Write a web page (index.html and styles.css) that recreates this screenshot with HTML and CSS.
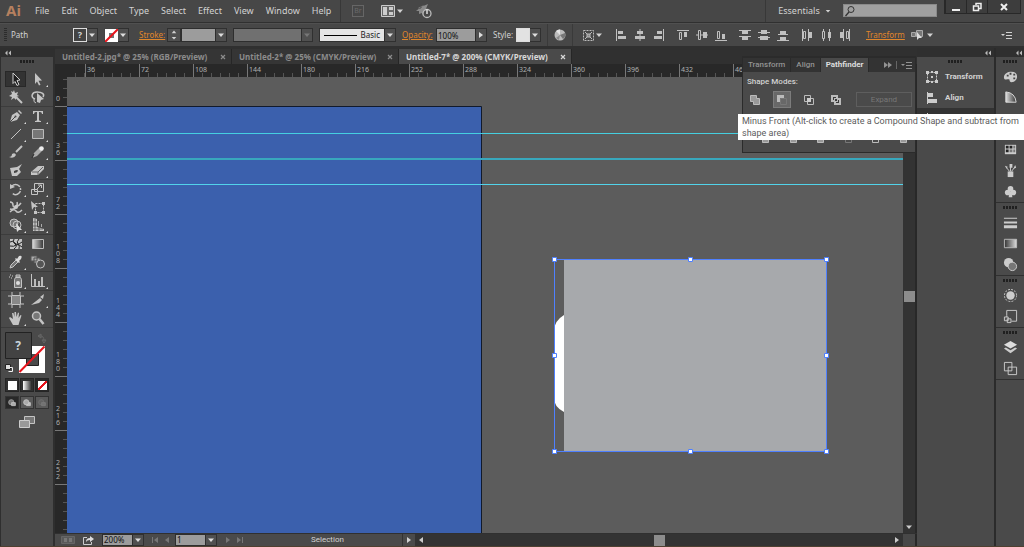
FILE: index.html
```html
<!DOCTYPE html>
<html lang="en">
<head>
<meta charset="utf-8">
<title>Untitled-7* @ 200% (CMYK/Preview)</title>
<link rel="stylesheet" href="styles.css">
</head>
<body>
<svg class="sprite" aria-hidden="true">
  <defs>
    <linearGradient id="fade"><stop offset="0" stop-color="#333"/><stop offset="1" stop-color="#ddd"/></linearGradient>
    <linearGradient id="fade-rev"><stop offset="0" stop-color="#ddd"/><stop offset="1" stop-color="#333"/></linearGradient>
  </defs>
  <symbol id="select" viewBox="0 0 16 16"><path d="M5 2l7 7-3 .5 2 4-2 1-2-4-2 2z" fill="#1c1c1c" stroke="#ccc"/></symbol>
  <symbol id="direct" viewBox="0 0 16 16"><path d="M5 2l7 7.500-3.500.3 2 4-1.500.7-2-4L5 13z" fill="#c4c4c4"/></symbol>
  <symbol id="wand" viewBox="0 0 16 16"><path d="M6 1l1 3 3-1-1 3 2 1-3 1 0 3-2-2-3 2 1-3-3-1 3-2-1-3 2 1z" fill="#c4c4c4"/><path d="M8 8l6 6" stroke="#c4c4c4" stroke-width="2"/></symbol>
  <symbol id="lasso" viewBox="0 0 16 16"><path d="M5 10C0 8 2 3 7 3s8 2 6 5" fill="none" stroke="#c4c4c4" stroke-width="1.500"/><path d="M4 10q-1 3 2 4" fill="none" stroke="#c4c4c4"/><path d="M7 4l7 6-3 1-1 3-3-1z" fill="#c4c4c4"/></symbol>
  <symbol id="pen" viewBox="0 0 16 16"><path d="M2 14l2-7 5-3 3 3-3 5zM10 3l1-1 3 3-1 1z" fill="#c4c4c4"/><path d="M2 14l5-5" stroke="#474747"/><circle cx="7.500" cy="8.500" r="1" fill="#474747"/></symbol>
  <symbol id="type" viewBox="0 0 16 16"><path d="M3 3h10v3h-1q0-2-2-2H9v8q0 1 2 1v1H5v-1q2 0 2-1V4H6Q4 4 4 6H3z" fill="#c4c4c4"/></symbol>
  <symbol id="line" viewBox="0 0 16 16"><path d="M3 13L13 3" stroke="#c4c4c4"/></symbol>
  <symbol id="rect" viewBox="0 0 16 16"><path d="M2.500 3.500h11v9h-11z" fill="#777" stroke="#bbb"/></symbol>
  <symbol id="brush" viewBox="0 0 16 16"><path d="M14 2L8 8" stroke="#c4c4c4" stroke-width="2"/><path d="M1 13q3 0 3-3 3-2 4 1-2 4-7 2z" fill="#c4c4c4"/></symbol>
  <symbol id="pencil" viewBox="0 0 16 16"><path d="M2 14l2-5 6-6 3 3-6 6z" fill="#aaa"/><circle cx="11.500" cy="4.500" r="2.300" fill="#eee"/><path d="M2 14l2-4" stroke="#222"/></symbol>
  <symbol id="blob" viewBox="0 0 16 16"><path d="M2 6l7-1 5-3-3 5 2 3-4 4H4z" fill="#c4c4c4"/><path d="M6 9q4-2 4 0-1 2-4 2z" fill="#444"/></symbol>
  <symbol id="eraser" viewBox="0 0 16 16"><path d="M1 10l7-6h6v3l-6 6H1z" fill="#c4c4c4"/><path d="M2 10h6l5-5M8 10v3" fill="none" stroke="#666"/></symbol>
  <symbol id="rotate" viewBox="0 0 16 16"><path d="M4 5a5 5 0 1 1 0 7" fill="none" stroke="#c4c4c4" stroke-width="1.500" stroke-dasharray="9 1 2 1"/><path d="M2 3v5l5-2z" fill="#c4c4c4"/></symbol>
  <symbol id="scale" viewBox="0 0 16 16"><path d="M4.500 2.500h9v8h-9zM1.500 8.500h6v5h-6z" fill="none" stroke="#c4c4c4"/><path d="M7 8l4-4M8 4h3.500v3" fill="none" stroke="#c4c4c4"/></symbol>
  <symbol id="width" viewBox="0 0 16 16"><path d="M2 3q3 0 3 3t3 2 5-4M9 3q1 2-1 5t-6 2M2 13q4-4 6-1t6-1" fill="none" stroke="#c4c4c4" stroke-width="1.500"/><circle cx="8" cy="8" r="2" fill="#ccc"/></symbol>
  <symbol id="free" viewBox="0 0 16 16"><path d="M5.500 4.500h8v9h-8z" fill="none" stroke="#c4c4c4" stroke-dasharray="2 1"/><path d="M1 2l7 6-4 0-2 3zM12 3h3v3h-3zM12 12h3v3h-3zM4 12h3v3H4z" fill="#c4c4c4"/></symbol>
  <symbol id="builder" viewBox="0 0 16 16"><circle cx="6" cy="6" r="4" fill="#777" stroke="#c4c4c4"/><circle cx="9" cy="8" r="4" fill="none" stroke="#c4c4c4"/><path d="M8 6l6 7-3 0-2 2z" fill="#ddd"/></symbol>
  <symbol id="persp" viewBox="0 0 16 16"><path d="M3 1l4 1v8l7 2v2H3z" fill="#c4c4c4"/><path d="M3 5h4M3 9h4M5 2v12M9 10v4M3 12h10" stroke="#4a4a4a" stroke-width=".7"/><path d="M8.500 4v5M11.500 7v3" stroke="#aaa"/></symbol>
  <symbol id="mesh" viewBox="0 0 16 16"><path d="M2 3h12v10H2z" fill="#c4c4c4"/><path d="M2 6q3-2 5 1t7-1M2 10q4 1 6-1t6 2M6 3q-2 3 1 5t-1 5M11 3q-3 3-1 5t1 5" fill="none" stroke="#222"/></symbol>
  <symbol id="gradient" viewBox="0 0 16 16"><path d="M2.500 3.500h11v9h-11z" fill="url(#fade-rev)" stroke="#bbb"/></symbol>
  <symbol id="dropper" viewBox="0 0 16 16"><path d="M2 14l1-3 5-5 2 2-5 5z" fill="#777" stroke="#c4c4c4"/><path d="M7 5l1-1 1 1 2-3q4-1 2 3l-2 2 1 1-1 1z" fill="#ddd"/></symbol>
  <symbol id="blend" viewBox="0 0 16 16"><path d="M1 2h6v5H1zM4 4h6v5H4z" fill="#aaa" stroke="#555"/><circle cx="10.500" cy="10" r="4" fill="#555" stroke="#c4c4c4"/></symbol>
  <symbol id="spray" viewBox="0 0 16 16"><path d="M6.500 6.500l1-2h5l1 2v8h-7zM8 2h4v2H8z" fill="#777" stroke="#c4c4c4"/><circle cx="10" cy="10" r="2" fill="#ddd"/><path d="M2 2h1M4 3h1M1 4h1M3 5h1" stroke="#ccc"/></symbol>
  <symbol id="graph" viewBox="0 0 16 16"><path d="M1.500 1v12.500H15" fill="none" stroke="#c4c4c4"/><path d="M4 6h2v7H4zM8 8h2v5H8zM11 4h2v9h-2z" fill="#bbb"/></symbol>
  <symbol id="artboard" viewBox="0 0 16 16"><path d="M4 4h8v8H4z" fill="#888"/><path d="M4 0v3M12 0v3M4 13v3M12 13v3M0 4h3M13 4h3M0 12h3M13 12h3M3.500 3.500h9v9h-9z" fill="none" stroke="#c4c4c4"/></symbol>
  <symbol id="slice" viewBox="0 0 16 16"><path d="M1 13L10 6l2 2-3 3zM10 5l4-3-1 5z" fill="#c4c4c4"/></symbol>
  <symbol id="hand" viewBox="0 0 16 16"><path d="M5 15l-4-7 1-1 3 2-1-6h1.500l1 4V2H8l.5 5L10 2.500l1 .5-.500 5 2-3 1 .5-2 6-1 3.500z" fill="#c4c4c4"/></symbol>
  <symbol id="zoom" viewBox="0 0 16 16"><circle cx="6.500" cy="6" r="4" fill="#777" stroke="#c4c4c4" stroke-width="1.500"/><path d="M9.500 9l4 5" stroke="#c4c4c4" stroke-width="2.500"/></symbol>
  <symbol id="screens" viewBox="0 0 18 16"><path d="M6.500 2.500h10v7h-10z" fill="#777" stroke="#c4c4c4"/><path d="M1.500 6.500h10v7h-10z" fill="#999" stroke="#ccc"/></symbol>
  <symbol id="mode" viewBox="0 0 16 16"><circle cx="7" cy="7" r="3.500" fill="#777" stroke="#aaa"/><path d="M7.500 7.500h5v4h-5z" fill="#aaa" stroke="#ccc"/></symbol>
  <symbol id="mode2" viewBox="0 0 16 16"><path d="M7.500 7.500h5v4h-5z" fill="#bbb" stroke="#ccc"/><circle cx="7" cy="7" r="3.500" fill="#aaa" stroke="#ccc"/></symbol>

  <symbol id="down" viewBox="0 0 8 8"><path d="M1 2.500h6L4 6z"/></symbol>
  <symbol id="up" viewBox="0 0 8 8"><path d="M1 5.500h6L4 2z"/></symbol>
  <symbol id="right" viewBox="0 0 8 8"><path d="M2 1v6l4-3z"/></symbol>
  <symbol id="left" viewBox="0 0 8 8"><path d="M6 1v6L2 4z"/></symbol>
  <symbol id="collapse" viewBox="0 0 8 8"><path d="M3.500 1.500v5L1 4zM7 1.500v5L4.500 4z"/></symbol>
  <symbol id="expand" viewBox="0 0 8 8"><path d="M0 1v6l4-3zM4 1v6l4-3z"/></symbol>
  <symbol id="first" viewBox="0 0 8 8"><path d="M1 1h1v6H1zM7 1v6L3 4z"/></symbol>
  <symbol id="last" viewBox="0 0 8 8"><path d="M6 1h1v6H6zM1 1v6l4-3z"/></symbol>
  <symbol id="close" viewBox="0 0 8 8"><path d="M2 2l4 4M6 2L2 6" stroke="currentColor" stroke-width="1.200"/></symbol>
  <symbol id="flyout" viewBox="0 0 12 10"><path d="M0 4h4L2 6zM5 2h6v1H5zM5 5h6v1H5zM5 8h6v1H5z"/></symbol>

  <symbol id="al1" viewBox="0 0 12 12"><path d="M1 0h1v12H1zM3 2h5v3H3zM3 7h8v3H3z"/></symbol>
  <symbol id="al2" viewBox="0 0 12 12"><path d="M5.500 0h1v12h-1zM3 2h6v3H3zM1 7h10v3H1z"/></symbol>
  <symbol id="al3" viewBox="0 0 12 12"><path d="M10 0h1v12h-1zM4 2h5v3H4zM1 7h8v3H1z"/></symbol>
  <symbol id="al4" viewBox="0 0 12 12"><path d="M0 1h12v1H0zM7 3h3v5H7z"/><path d="M2.500 3.500h2v7h-2z" fill="none" stroke="currentColor"/></symbol>
  <symbol id="al5" viewBox="0 0 12 12"><path d="M0 5.500h12v1H0zM7 3h4v6H7z"/><path d="M2.500 1.500h2v9h-2z" fill="#474747" stroke="currentColor"/></symbol>
  <symbol id="al6" viewBox="0 0 12 12"><path d="M0 11h12v1H0zM7 5h3v5H7z"/><path d="M2.500 2.500h2v7h-2z" fill="none" stroke="currentColor"/></symbol>
  <symbol id="di1" viewBox="0 0 12 12"><path d="M0 1h12v1H0zM3 2h6v3H3zM0 7h12v1H0zM3 8h6v3H3z"/></symbol>
  <symbol id="di2" viewBox="0 0 12 12"><path d="M0 3h12v1H0zM3 1h6v4H3zM0 8h12v1H0zM2 7h8v4H2z"/></symbol>
  <symbol id="di3" viewBox="0 0 12 12"><path d="M3 2h6v3H3zM1 5h10v1H1zM3 8h6v3H3zM0 11h12v1H0z"/></symbol>
  <symbol id="di4" viewBox="0 0 12 12"><path d="M1 0h1v12H1zM7 0h1v12H7zM8 3h3v6H8z"/><path d="M2.500 2.500h2v7h-2z" fill="none" stroke="currentColor"/></symbol>
  <symbol id="di5" viewBox="0 0 12 12"><path d="M3 0h1v12H3zM9 0h1v12H9zM8 3h3v6H8z"/><path d="M2.500 2.500h2v7h-2z" fill="#474747" stroke="currentColor"/></symbol>
  <symbol id="di6" viewBox="0 0 12 12"><path d="M4 0h1v12H4zM10 0h1v12h-1zM1 3h3v6H1z"/><path d="M7.500 2.500h2v7h-2z" fill="none" stroke="currentColor"/></symbol>

  <symbol id="unite" viewBox="0 0 12 12"><path d="M1.500 1.500h6v3h3v6h-6v-3h-3z" fill="#999" stroke="#bbb"/></symbol>
  <symbol id="minus" viewBox="0 0 12 12"><path d="M1 1h7v3H4v4H1z" fill="#bbb"/><path d="M4.500 4.500h6v6h-6z" fill="none" stroke="#777"/></symbol>
  <symbol id="intersect" viewBox="0 0 12 12"><path d="M1.500 1.500h6v6h-6zM4.500 4.500h6v6h-6z" fill="none" stroke="#bbb"/><path d="M4 4h4v4H4z" fill="#ccc"/></symbol>
  <symbol id="exclude" viewBox="0 0 12 12"><path d="M1 1h7v3h3v7H4V8H1z" fill="#bbb"/><path d="M3 3h3v1H4v2H3zM5 5h2v2H5zM8 6h1v3H6V8h2z" fill="#3a3a3a"/></symbol>

  <symbol id="p-transform" viewBox="0 0 14 14"><path d="M2.500 2.500h9v9h-9z" fill="none" stroke="#ccc" stroke-dasharray="2 1"/><path d="M1 1h3v3H1zM10 1h3v3h-3zM1 10h3v3H1zM10 10h3v3h-3zM6 1h2v2H6zM6 11h2v2H6zM6 6h2v2H6z" fill="#ccc"/></symbol>
  <symbol id="p-align" viewBox="0 0 14 14"><path d="M2 1h1v12H2zM3 2h5v4H3zM3 8h9v4H3z" fill="#ccc"/></symbol>
  <symbol id="p-color" viewBox="0 0 16 16"><path d="M1 9C1 5 5 3 9 3c4 0 6 2 6 5s-2 6-6 6c-3 0-1-3-3-3s-5 1-5-2z" fill="#ccc"/><path d="M4 6h2v2H4zM7 4h2v2H7zM11 5h2v2h-2zM11 9h2v2h-2z" fill="#444"/></symbol>
  <symbol id="p-guide" viewBox="0 0 16 16"><path d="M3 13V2q10 1 11 11z" fill="url(#fade-rev)" stroke="#ddd"/></symbol>
  <symbol id="p-symbol" viewBox="0 0 16 16"><path d="M2 12l9-8 2 2-8 8z" fill="#ccc"/></symbol>
  <symbol id="p-swatch" viewBox="0 0 16 16"><path d="M2 3h12v10H2z" fill="#ccc"/><path d="M3 4h3v3H3zM7 4h3v3H7zM3 8h3v3H3z" fill="#222"/><path d="M11 4h2v3h-2zM7 8h3v3H7zM11 8h2v3h-2z" fill="#777"/></symbol>
  <symbol id="p-brush" viewBox="0 0 16 16"><path d="M5 9h6v6H5z" fill="#ccc"/><path d="M7 9L3 4M8 9V3M9 9l4-5" stroke="#ccc"/><path d="M2 3l3 1-1 2zM7 1h3v4H7zM13 2l1 3-3 1z" fill="#ccc"/></symbol>
  <symbol id="p-club" viewBox="0 0 16 16"><circle cx="8" cy="5" r="3" fill="#ccc"/><circle cx="5" cy="9" r="3" fill="#ccc"/><circle cx="11" cy="9" r="3" fill="#ccc"/><path d="M7 8h2l1 6H6z" fill="#ccc"/></symbol>
  <symbol id="p-stroke" viewBox="0 0 16 16"><path d="M1 3h14v1H1zM1 7h14v2H1zM1 11h14v3H1z" fill="#ccc"/></symbol>
  <symbol id="p-gradient" viewBox="0 0 16 16"><path d="M1.500 3.500h13v9h-13z" fill="url(#fade)" stroke="#bbb"/></symbol>
  <symbol id="p-transp" viewBox="0 0 16 16"><circle cx="6" cy="6" r="5" fill="#ccc"/><circle cx="10" cy="10" r="4.500" fill="#777" stroke="#ccc"/></symbol>
  <symbol id="p-appear" viewBox="0 0 16 16"><circle cx="8" cy="8" r="4.500" fill="#ccc"/><circle cx="8" cy="8" r="6.500" fill="none" stroke="#ccc" stroke-dasharray="2 1.400"/></symbol>
  <symbol id="p-style" viewBox="0 0 16 16"><path d="M4 7V1.500h10.500V13H9M4 7v3" fill="none" stroke="#ccc"/><path d="M1.500 8.500h4v4h-4zM4.500 10.500h4v4h-4z" fill="#555" stroke="#ccc"/></symbol>
  <symbol id="p-layers" viewBox="0 0 16 16"><path d="M8 1l7 4-7 4-7-4z" fill="#ddd"/><path d="M1 9l2-1 5 3 5-3 2 1-7 5z" fill="#ccc"/></symbol>
  <symbol id="p-boards" viewBox="0 0 16 16"><path d="M1.500 1.500h8v9h-8zM5.500 6.500h9v8h-9z" fill="#4a4a4a" stroke="#ccc"/></symbol>
</svg>

<header class="menubar">
  <span class="logo">Ai</span>
  <nav class="menus">
    <button>File</button><button>Edit</button><button>Object</button><button>Type</button><button>Select</button><button>Effect</button><button>View</button><button>Window</button><button>Help</button>
  </nav>
  <div class="app-tools">
    <button class="bridge" aria-label="Bridge" disabled>Br</button>
    <button class="arrange" aria-label="Arrange documents">
      <svg width="14" height="12" viewBox="0 0 14 12"><path d="M.5.5h13v11H.5z" fill="#666" stroke="#ccc"/><path d="M2 2h4v8H2zM8 2h4v3H8zM8 7h4v3H8z" fill="#ccc"/></svg>
      <svg class="tri"><use href="#down"/></svg>
    </button>
    <button class="launch" aria-label="GPU performance">
      <svg width="18" height="16" viewBox="0 0 18 16"><path d="M13 1L6 4 1 8l3 0 0 3 3-1 1 3 2-5zM3 5l6-3-4 4z" fill="#8a8a8a"/><circle cx="12" cy="10.500" r="4" fill="#474747" stroke="#bbb" stroke-width="1.300"/><path d="M12 6v5" stroke="#ddd" stroke-width="1.500"/></svg>
    </button>
  </div>
  <button class="workspace-menu">Essentials <svg class="tri"><use href="#down"/></svg></button>
  <label class="search">
    <svg width="12" height="12" viewBox="0 0 12 12"><circle cx="7" cy="4.500" r="3" fill="none" stroke="#333"/><path d="M5 7l-3.500 4" stroke="#333" stroke-width="1.300"/></svg>
    <input type="search" aria-label="Search">
  </label>
  <div class="window-buttons">
    <button aria-label="Minimize"><svg width="10" height="10" viewBox="0 0 10 10"><path d="M1 7h8v2H1z"/></svg></button>
    <button aria-label="Restore"><svg width="10" height="10" viewBox="0 0 10 10"><path d="M4 3V1.500h5v5H7M1.500 4h5v4.500h-5z" fill="none" stroke="#eee" stroke-width="1.500"/></svg></button>
    <button class="wide" aria-label="Close"><svg width="10" height="10" viewBox="0 0 10 10"><path d="M2 2l6 6M8 2L2 8" stroke="#eee" stroke-width="2"/></svg></button>
  </div>
</header>

<section class="control" aria-label="Control">
  <span class="vgrip"></span>
  <span class="kind">Path</span>
  <div class="combo">
    <button class="swatch" aria-label="Fill">?</button><button class="drop" aria-label="Fill options"><svg class="tri"><use href="#down"/></svg></button>
  </div>
  <div class="combo">
    <button class="swatch none" aria-label="Stroke colour"><svg width="13" height="13" viewBox="0 0 13 13"><path d="M0 0h13v13H0z" fill="#fff"/><path d="M4 4h5v5H4z" fill="#777"/><path d="M0 13L13 0" stroke="#e8141c" stroke-width="2"/></svg></button><button class="drop" aria-label="Stroke options"><svg class="tri"><use href="#down"/></svg></button>
  </div>
  <a class="link stroke-link" href="#stroke">Stroke:</a>
  <div class="combo stroke-combo">
    <span class="spin"><svg class="tri"><use href="#up"/></svg><svg class="tri"><use href="#down"/></svg></span><input class="w34" aria-label="Stroke weight"><button class="drop" aria-label="Stroke weights"><svg class="tri"><use href="#down"/></svg></button>
  </div>
  <div class="combo off">
    <input class="w68" aria-label="Width profile" disabled><button class="drop" aria-label="Profiles" disabled><svg class="tri"><use href="#down"/></svg></button>
  </div>
  <div class="combo">
    <button class="basic"><i></i>Basic</button><button class="drop" aria-label="Brushes"><svg class="tri"><use href="#down"/></svg></button>
  </div>
  <a class="link opacity-link" href="#opacity">Opacity:</a>
  <div class="combo"><input class="w39" value="100%" aria-label="Opacity"><button class="drop" aria-label="Opacity slider"><svg class="tri"><use href="#right"/></svg></button></div>
  <span class="style-label">Style:</span>
  <div class="combo"><button class="swatch light" aria-label="Graphic style"></button><button class="drop" aria-label="Styles"><svg class="tri"><use href="#down"/></svg></button></div>
  <div class="boxed">
    <button aria-label="Recolor artwork"><svg width="12" height="12" viewBox="0 0 12 12"><circle cx="6" cy="6" r="5.500" fill="#bbb"/><path d="M6 6l5-2q1 4-2 6z" fill="#777"/><path d="M6 6L2 2q2-2 4-1.500z" fill="#e4e4e4"/><path d="M6 6l-1 5-3-2z" fill="#8a8a8a"/></svg></button>
  </div>
  <button class="align-to" aria-label="Align to"><svg width="11" height="11" viewBox="0 0 11 11"><path d="M.5.500h10v10H.5z" fill="none" stroke="#bbb" stroke-dasharray="2 1"/><path d="M2 2l2 2M9 2L7 4M2 9l2-2M9 9L7 7M4 4h3v3H4z" stroke="#bbb" fill="#888"/></svg><svg class="tri"><use href="#down"/></svg></button>
  <div class="aligns">
    <div><button aria-label="Align left"><svg><use href="#al1"/></svg></button><button aria-label="Align centre"><svg><use href="#al2"/></svg></button><button aria-label="Align right"><svg><use href="#al3"/></svg></button></div>
    <div><button aria-label="Align top"><svg><use href="#al4"/></svg></button><button aria-label="Align middle"><svg><use href="#al5"/></svg></button><button aria-label="Align bottom"><svg><use href="#al6"/></svg></button></div>
    <div><button aria-label="Distribute top"><svg><use href="#di1"/></svg></button><button aria-label="Distribute middle"><svg><use href="#di2"/></svg></button><button aria-label="Distribute bottom"><svg><use href="#di3"/></svg></button></div>
    <div><button aria-label="Distribute left"><svg><use href="#di4"/></svg></button><button aria-label="Distribute centre"><svg><use href="#di5"/></svg></button><button aria-label="Distribute right"><svg><use href="#di6"/></svg></button></div>
  </div>
  <a class="link transform-link" href="#transform">Transform</a>
  <button class="isolate" aria-label="Isolate"><svg width="12" height="12" viewBox="0 0 12 12"><path d="M.5 3.500h4v4h-4zM5.500 1.500h6v6h-6z" fill="#777" stroke="#aaa"/><path d="M6 3l0 8 2-2h3z" fill="#ddd"/></svg><svg class="tri"><use href="#down"/></svg></button>
  <button class="bar-menu" aria-label="Control menu"><svg class="fly"><use href="#flyout"/></svg></button>
</section>

<main class="work">
  <aside class="toolbox">
    <div class="dock-head start"><svg class="tri"><use href="#collapse"/></svg></div>
    <div class="grip"></div>
    <div class="tools"><button class="on" aria-label="Selection"><svg><use href="#select"/></svg></button><button class="more" aria-label="Direct selection"><svg><use href="#direct"/></svg></button><button aria-label="Magic wand"><svg><use href="#wand"/></svg></button><button aria-label="Lasso"><svg><use href="#lasso"/></svg></button></div>
    <div class="tools"><button class="more" aria-label="Pen"><svg><use href="#pen"/></svg></button><button class="more" aria-label="Type"><svg><use href="#type"/></svg></button><button class="more" aria-label="Line"><svg><use href="#line"/></svg></button><button class="more" aria-label="Rectangle"><svg><use href="#rect"/></svg></button><button aria-label="Paintbrush"><svg><use href="#brush"/></svg></button><button class="more" aria-label="Pencil"><svg><use href="#pencil"/></svg></button><button aria-label="Blob brush"><svg><use href="#blob"/></svg></button><button class="more" aria-label="Eraser"><svg><use href="#eraser"/></svg></button></div>
    <div class="tools"><button class="more" aria-label="Rotate"><svg><use href="#rotate"/></svg></button><button class="more" aria-label="Scale"><svg><use href="#scale"/></svg></button><button class="more" aria-label="Width"><svg><use href="#width"/></svg></button><button aria-label="Free transform"><svg><use href="#free"/></svg></button><button class="more" aria-label="Shape builder"><svg><use href="#builder"/></svg></button><button class="more" aria-label="Perspective grid"><svg><use href="#persp"/></svg></button></div>
    <div class="tools"><button aria-label="Mesh"><svg><use href="#mesh"/></svg></button><button aria-label="Gradient"><svg><use href="#gradient"/></svg></button><button class="more" aria-label="Eyedropper"><svg><use href="#dropper"/></svg></button><button aria-label="Blend"><svg><use href="#blend"/></svg></button></div>
    <div class="tools"><button class="more" aria-label="Symbol sprayer"><svg><use href="#spray"/></svg></button><button class="more" aria-label="Column graph"><svg><use href="#graph"/></svg></button></div>
    <div class="tools"><button aria-label="Artboard"><svg><use href="#artboard"/></svg></button><button class="more" aria-label="Slice"><svg><use href="#slice"/></svg></button><button class="more" aria-label="Hand"><svg><use href="#hand"/></svg></button><button aria-label="Zoom"><svg><use href="#zoom"/></svg></button></div>
    <div class="paint">
      <svg width="46" height="42" viewBox="0 0 46 42"><path d="M14 14h26v27H14z" fill="#fff"/><path d="M21.500 21.500h12v12h-12z" fill="#4a4a4a" stroke="#222"/><path d="M.5.5h26v26H.5z" fill="#434343" stroke="#222"/><path d="M27 14h13v8H27z" fill="#fff"/><path d="M27 22h6v11H22v-6h5z" fill="#4a4a4a"/><text x="13" y="18" text-anchor="middle" class="query">?</text><path d="M14.500 40L39.500 14.500" stroke="#e8141c" stroke-width="2"/><path d="M34 4q5-1 5 5M33 4l3-2v4zM37 8h4l-2 3z" fill="none" stroke="#666"/><path d="M.5 32.500h5v5h-5z" fill="#ddd" stroke="#222"/><path d="M4.500 35.500h3v4h-4" fill="none" stroke="#eee"/></svg>
    </div>
    <div class="fills">
      <button aria-label="Color"><i class="c-white"></i></button><button aria-label="Gradient fill"><i class="c-grad"></i></button><button class="on" aria-label="None"><i class="c-none"></i></button>
    </div>
    <div class="modes">
      <button class="on" aria-label="Draw normal"><svg><use href="#mode"/></svg></button><button aria-label="Draw behind"><svg><use href="#mode2"/></svg></button><button class="dim" aria-label="Draw inside"><svg><use href="#mode"/></svg></button>
    </div>
    <button class="screen-mode" aria-label="Screen mode"><svg width="18" height="16"><use href="#screens"/></svg></button>
  </aside>

  <section class="document">
    <div class="tabs">
      <button class="tab first">Untitled-2.jpg* @ 25% (RGB/Preview)<svg class="tri"><use href="#close"/></svg></button>
      <button class="tab second">Untitled-2* @ 25% (CMYK/Preview)<svg class="tri"><use href="#close"/></svg></button>
      <button class="tab third on">Untitled-7* @ 200% (CMYK/Preview)<svg class="tri"><use href="#close"/></svg></button>
    </div>
    <div class="hruler"><b></b><span>36</span><span>72</span><span>108</span><span>144</span><span>180</span><span>216</span><span>252</span><span>288</span><span>324</span><span>360</span><span>396</span><span>432</span><span>468</span></div>
    <div class="view">
      <div class="vruler"><b>0</b><span>36</span><span>72</span><span>108</span><span>144</span><span>180</span><span>216</span><span>252</span><span></span></div>
      <svg class="canvas" role="img" aria-label="Artboard">
        <path d="M0 29.500h414.500V900H0z" fill="#3b60ad"/>
        <path d="M0 29.500h414.500V900" fill="none" stroke="#111a2c"/>
        <rect y="56" width="100%" height="1" fill="#45cfe0"/>
        <rect y="81" width="100%" height="2" fill="#38a8bd"/>
        <rect y="107" width="100%" height="1" fill="#52d3ea"/>
        <path d="M497 238q-10 6-10 16v67q0 9 10 14z" fill="#fff"/>
        <path d="M497 182h263v192H497z" fill="#a7a9ac"/>
        <path d="M487.500 182.500h272v192h-272z" fill="none" stroke="#4f80ff"/>
        <g fill="#fff" stroke="#4f80ff"><path d="M485.500 180.500h4v4h-4zM621.500 180.500h4v4h-4zM757.500 180.500h4v4h-4zM485.500 276.500h4v4h-4zM757.500 276.500h4v4h-4zM485.500 372.500h4v4h-4zM621.500 372.500h4v4h-4zM757.500 372.500h4v4h-4z"/></g>
      </svg>
      <div class="vscroll"><i></i><svg class="tri"><use href="#down"/></svg></div>
    </div>
    <footer class="status">
      <div class="status-left">
        <svg width="14" height="8" viewBox="0 0 14 8"><path d="M.5.500h13v7H.5z" fill="#5a5a5a" stroke="#666"/><path d="M3 2h3v4H3zM8 2h3v4H8z" fill="#777"/></svg>
        <svg width="11" height="10" viewBox="0 0 11 10"><path d="M4 2.500H.5v7h8V7" fill="none" stroke="#ccc"/><path d="M3 7q0-4 4-4V1l4 3-4 3V5Q4 5 3 7z" fill="#ddd"/></svg>
        <div class="combo"><input class="w31" value="200%" aria-label="Zoom level"><button class="drop" aria-label="Zoom levels"><svg class="tri"><use href="#down"/></svg></button></div>
        <button class="nav" aria-label="First"><svg class="tri"><use href="#first"/></svg></button><button class="nav" aria-label="Previous"><svg class="tri"><use href="#left"/></svg></button>
        <div class="combo"><input class="w31" value="1" aria-label="Artboard number"><button class="drop" aria-label="Artboards"><svg class="tri"><use href="#down"/></svg></button></div>
        <button class="nav" aria-label="Next"><svg class="tri"><use href="#right"/></svg></button><button class="nav" aria-label="Last"><svg class="tri"><use href="#last"/></svg></button>
        <span class="status-text">Selection</span>
        <button class="status-more" aria-label="Status menu"><svg class="tri"><use href="#right"/></svg></button>
      </div>
      <div class="hscroll"><svg class="tri"><use href="#left"/></svg><i></i><svg class="tri"><use href="#right"/></svg></div>
      <div class="corner"></div>
    </footer>

    <section class="pathfinder" aria-label="Pathfinder">
      <div class="ptabs"><button>Transform</button><button>Align</button><button class="on">Pathfinder</button><span class="pspace"></span><svg class="tri"><use href="#expand"/></svg><i></i><svg class="fly"><use href="#flyout"/></svg></div>
      <div class="pbody">
        <p>Shape Modes:</p>
        <div class="shapes"><button aria-label="Unite"><svg><use href="#unite"/></svg></button><button class="on" aria-label="Minus front"><svg><use href="#minus"/></svg></button><button aria-label="Intersect"><svg><use href="#intersect"/></svg></button><button aria-label="Exclude"><svg><use href="#exclude"/></svg></button><button class="expand" disabled>Expand</button></div>
        <div class="finders"><button aria-label="Divide"><svg><use href="#unite"/></svg></button><button aria-label="Trim"><svg><use href="#unite"/></svg></button><button aria-label="Merge"><svg><use href="#unite"/></svg></button><button aria-label="Crop"><svg><use href="#minus"/></svg></button><button aria-label="Outline"><svg><use href="#intersect"/></svg></button><button aria-label="Minus back"><svg><use href="#unite"/></svg></button></div>
      </div>
    </section>
  </section>

  <aside class="dock">
    <div class="dock-head"><svg class="tri"><use href="#collapse"/></svg></div>
    <div class="grip"></div>
    <button><svg><use href="#p-transform"/></svg>Transform</button>
    <button><svg><use href="#p-align"/></svg>Align</button>
    <button class="on" aria-label="Pathfinder panel"><svg><use href="#p-align"/></svg></button>
  </aside>
  <aside class="icons">
    <div class="dock-head"><svg class="tri"><use href="#collapse"/></svg></div>
    <div class="set"><div class="grip"></div><button aria-label="Color panel"><svg><use href="#p-color"/></svg></button><button aria-label="Color guide"><svg><use href="#p-guide"/></svg></button><button aria-label="Kuler"><svg><use href="#p-symbol"/></svg></button></div>
    <div class="set"><div class="grip"></div><button aria-label="Swatches"><svg><use href="#p-swatch"/></svg></button><button aria-label="Brushes panel"><svg><use href="#p-brush"/></svg></button><button aria-label="Symbols"><svg><use href="#p-club"/></svg></button></div>
    <div class="set"><div class="grip"></div><button aria-label="Stroke panel"><svg><use href="#p-stroke"/></svg></button><button aria-label="Gradient panel"><svg><use href="#p-gradient"/></svg></button><button aria-label="Transparency"><svg><use href="#p-transp"/></svg></button></div>
    <div class="set"><div class="grip"></div><button aria-label="Appearance"><svg><use href="#p-appear"/></svg></button><button aria-label="Graphic styles"><svg><use href="#p-style"/></svg></button></div>
    <div class="set"><div class="grip"></div><button aria-label="Layers"><svg><use href="#p-layers"/></svg></button><button aria-label="Artboards panel"><svg><use href="#p-boards"/></svg></button></div>
  </aside>
  <div class="tooltip" role="tooltip">Minus Front (Alt-click to create a Compound Shape and subtract from shape area)</div>
</main>
</body>
</html>
```
FILE: styles.css
```css
* { box-sizing: border-box; }
body {
  margin: 0;
  height: 100vh;
  display: flex;
  flex-direction: column;
  overflow: hidden;
  background: #4a4a4a;
  color: #d2d2d2;
  font: 8px/12px "Noto Sans", "Open Sans", sans-serif;
  border-bottom: 1px solid #4f4030;
}
button, input {
  font: inherit;
  color: inherit;
  margin: 0;
  padding: 0;
  border: 0;
  border-radius: 0;
  background: none;
}
button { display: flex; align-items: center; justify-content: center; flex: none; white-space: nowrap; }
svg { display: block; flex: none; }
.sprite { position: absolute; width: 0; height: 0; }
.tri { width: 8px; height: 8px; fill: currentColor; }
.fly { width: 12px; height: 10px; fill: currentColor; }

/* Menu bar */
.menubar { display: flex; flex: none; height: 23px; background: #474747; border-bottom: 1px solid #303030; font-size: 9px; }
.logo { width: 29px; padding-left: 6px; font: bold 15px/21px "Noto Sans", sans-serif; color: #b5805f; }
.menus { display: flex; width: 312px; border-right: 1px solid #383838; }
.menus button { padding: 0 6px; }
.app-tools { display: flex; align-items: center; flex: 1; gap: 11px; padding-left: 11px; }
.bridge { width: 12px; height: 12px; border: 1px solid #666; color: #6a6a6a; font-size: 7px; }
.arrange { gap: 1px; padding-left: 6px; }
.workspace-menu { width: 78px; gap: 5px; border-left: 1px solid #383838; }
.workspace-menu .tri { width: 6px; height: 6px; }
.search { display: flex; align-items: center; width: 94px; height: 13px; margin: 4px 7px 0 0; background: #a0a0a0; border: 1px solid #8a8a8a; }
.search input { width: 80px; min-width: 0; color: #222; outline: 0; }
.window-buttons { display: flex; height: 14px; margin-right: 3px; border: 1px solid #282828; border-top: 0; background: #3d3d3d; fill: #eee; }
.window-buttons button { width: 21px; border-left: 1px solid #282828; }
.window-buttons .wide { width: 33px; }

/* Control bar */
.control { display: flex; flex: none; align-items: center; height: 26px; padding: 0 11px 0 4px; background: #474747; border-bottom: 2px solid #303030; border-top: 1px solid #505050; height: 25px; }
.vgrip { width: 3px; height: 14px; background: repeating-linear-gradient(#2c2c2c 0 1px, #474747 1px 2px); }
.kind { width: 62px; margin-left: 4px; }
.combo { display: flex; height: 14px; margin-right: 6px; flex: none; }
.combo input { height: 14px; background: #9c9c9c; color: #111; border: 1px solid #2e2e2e; padding: 0 1px; outline: 0; }
.drop { width: 11px; background: #505050; border: 1px solid #303030; border-left: 0; color: #ddd; }
.swatch { width: 14px; height: 14px; border: 1px solid #ddd; background: #434343; font-weight: bold; font-size: 9px; }
.swatch.none { border: 0; }
.swatch.light { background: #e2e2e2; }
.link { color: #e0862b; text-decoration: underline; flex: none; }
.stroke-link { width: 28px; margin-left: 4px; }
.spin { width: 14px; display: flex; flex-direction: column; align-items: center; justify-content: center; border: 1px solid #303030; background: #505050; }
.spin .tri { width: 6px; height: 6px; }
.w31 { width: 31px; }
.w34 { width: 35px; }
.w39 { width: 40px; }
.w68 { width: 69px; }
.off input { background: #707070; }
.off .drop { color: #777; }
.basic { width: 66px; background: #e4e4e4; color: #222; border: 1px solid #303030; gap: 4px; justify-content: flex-end; padding-right: 4px; }
.basic i { flex: 1; height: 1px; margin-left: 4px; background: #000; }
.opacity-link { width: 34px; }
.style-label { width: 23px; }
.boxed { display: flex; align-items: center; height: 22px; padding: 0 6px; border: 1px solid #3a3a3a; border-width: 0 1px; }
.align-to { gap: 1px; margin-left: 10px; }
.aligns { display: flex; gap: 12px; margin-left: 12px; fill: #c0c0c0; color: #c0c0c0; }
.aligns div { display: flex; gap: 7px; }
.aligns svg { width: 12px; height: 12px; }
.transform-link { margin-left: 15px; width: 45px; }
.isolate { gap: 3px; }
.bar-menu { margin-left: auto; }

/* Workspace */
.work { position: relative; display: flex; flex: 1; min-height: 0; }
.dock-head { display: flex; flex: none; align-items: center; justify-content: flex-end; height: 9px; padding-right: 1px; background: #2f2f2f; color: #bbb; }
.dock-head.start { justify-content: flex-start; padding-left: 3px; }
.grip { width: 15px; height: 3px; margin: 3px auto; background: repeating-linear-gradient(90deg, #202020 0 2px, #4a4a4a 2px 3px); }

.toolbox { display: flex; flex-direction: column; flex: none; width: 55px; border: solid #2f2f2f; border-width: 0 2px 0 1px; background: #4a4a4a; }
.toolbox > .grip { margin-bottom: 7px; }
.tools { display: grid; grid-template-columns: 22px 22px; grid-auto-rows: 18px; padding-left: 4px; border-top: 1px solid #3c3c3c; }
.grip + .tools { border-top: 0; }
.tools button { position: relative; }
.tools svg { width: 16px; height: 16px; }
.tools .on { margin: 1px 1px 1px 0; background: #333; border: 1px solid #282828; }
.tools .more::after { content: ""; position: absolute; right: 1px; bottom: 1px; border: 1px solid #ddd; border-left-color: transparent; border-top-color: transparent; }
.paint { padding: 4px 0 0 4px; border-top: 1px solid #3c3c3c; }
.query { font: bold 12px "Noto Sans", sans-serif; fill: #c8d4dc; }
.fills, .modes { display: flex; gap: 1px; margin: 4px 4px 0; }
.fills button { width: 14px; height: 14px; background: #303030; border: 1px solid #252525; }
.fills i { width: 9px; height: 9px; }
.fills .on, .modes .on { background: #282828; }
.c-white { background: #fff; }
.c-grad { background: linear-gradient(90deg, #fff, #222); }
.c-none { background: linear-gradient(135deg, #fff 42%, #e8141c 42% 58%, #fff 58%); }
.modes button { width: 14px; height: 13px; background: #5a5a5a; border: 1px solid #333; }
.modes svg { width: 12px; height: 12px; }
.modes .dim svg { opacity: .3; }
.screen-mode { margin: 5px auto 0; }

.document { position: relative; display: flex; flex-direction: column; flex: 1; min-width: 0; background: #303030; }
.tabs { display: flex; flex: none; height: 15px; margin-top: 1px; background: #303030; font-weight: bold; color: #8c8c8c; }
.tab { justify-content: space-between; padding: 0 4px 0 7px; border-right: 1px solid #262626; background: #353535; }
.first { width: 177px; }
.second { width: 167px; }
.third { width: 173px; }
.tab.on { background: #4a4a4a; color: #d8d8d8; }
.hruler { display: flex; flex: none; height: 13px; overflow: hidden; font-size: 7px; line-height: 11px; background: #282828; color: #b0b0b0; }
.hruler b { flex: none; width: 30px; background: repeating-linear-gradient(90deg, transparent 0 8px, #555 8px 9px) 12px 9px / 18px 4px no-repeat; border-left: 0; }
.hruler span { flex: none; width: 54px; padding-left: 1px; border-left: 1px solid #777; background: repeating-linear-gradient(90deg, transparent 0 8px, #555 8px 9px) 0 9px / 100% 4px no-repeat; }
.view { display: flex; flex: 1; min-height: 0; }
.vruler { display: flex; flex-direction: column; flex: none; width: 12px; overflow: hidden; background: #282828; color: #b0b0b0; font-size: 7px; line-height: 7px; }
.vruler b, .vruler span { display: flex; flex: none; align-items: flex-end; height: 54px; width: 12px; padding: 0 6px 4px 1px; border-bottom: 1px solid #777; font-weight: normal; word-break: break-all; background: repeating-linear-gradient(0deg, transparent 0 8px, #555 8px 9px) 8px 0 / 4px 100% no-repeat; }
.vruler b { height: 30px; }
.canvas { flex: 1; min-width: 0; height: 100%; background: #5c5c5c; }
.vscroll { display: flex; flex-direction: column; align-items: center; flex: none; width: 14px; padding-bottom: 2px; background: #333; border-right: 2px solid #282828; color: #ccc; }
.vscroll i { width: 11px; height: 11px; background: #8c8c8c; margin-top: 214px; margin-bottom: auto; }
.status { display: flex; flex: none; height: 13px; border-top: 1px solid #303030; background: #333; }
.status-left { display: flex; align-items: center; width: 360px; padding-left: 6px; background: #4a4a4a; }
.status-left > svg + svg { margin: 0 8px; }
.status .combo { height: 12px; margin-right: 5px; }
.status .combo input { height: 12px; }
.nav { width: 12px; color: #777; }
.nav + .combo { margin-left: 2px; }
.status-text { margin-left: auto; width: 91px; font-family: Roboto, sans-serif; }
.status-more { width: 13px; height: 12px; border-left: 1px solid #333; }
.hscroll { display: flex; align-items: center; flex: 1; padding: 0 2px; color: #ccc; }
.hscroll i { width: 11px; height: 11px; background: #8c8c8c; margin: 0 auto; }
.corner { width: 14px; background: #484848; border-right: 2px solid #282828; }

/* Floating panel over the canvas */
.pathfinder { position: absolute; top: 8px; right: 1px; width: 174px; height: 97px; display: flex; flex-direction: column; border: 1px solid #2b2b2b; border-top-width: 2px; background: #4a4a4a; font-family: Roboto, sans-serif; }
.ptabs { display: flex; align-items: center; height: 14px; background: #333; font-weight: 500; color: #929292; padding-right: 2px; }
.ptabs button { height: 14px; padding: 0 5px; border-right: 1px solid #2a2a2a; }
.ptabs .on { background: #4a4a4a; color: #ddd; font-weight: bold; }
.pspace { flex: 1; }
.ptabs i { width: 1px; height: 8px; margin: 0 4px; background: #666; }
.pbody { display: flex; flex-direction: column; flex: 1; padding: 4px 3px; }
.pbody p { margin: 0 0 3px 1px; font-weight: 500; }
.shapes { display: flex; align-items: center; gap: 9px; }
.shapes button { width: 18px; height: 17px; }
.shapes svg, .finders svg { width: 12px; height: 12px; }
.shapes .on { background: #686868; border: 1px solid #7c7c7c; }
.shapes .expand { width: 56px; height: 15px; margin-left: auto; border: 1px solid #5e5e5e; color: #777; }
.finders { display: flex; justify-content: space-between; margin: auto 4px 4px 12px; }

/* Right docks */
.dock { flex: none; width: 77px; background: #4a4a4a; font-family: Roboto, sans-serif; }
.dock .dock-head { padding-right: 2px; }
.dock > button { width: 100%; height: 21px; justify-content: flex-start; gap: 6px; padding-left: 8px; font-weight: bold; }
.dock > button svg { width: 14px; height: 14px; }
.dock > .on { background: #333; }
.icons { flex: none; width: 30px; border-left: 2px solid #2b2b2b; background: #4a4a4a; }
.set { border-bottom: 1px solid #303030; }
.set .grip { margin: 3px auto; }
.set button { width: 100%; height: 21px; }
.set svg { width: 15px; height: 15px; }

.tooltip { position: absolute; top: 66px; right: 0; width: 286px; padding: 1px 4px; background: #fff; color: #5c5c5c; font: 9px/12px Roboto, sans-serif; }
```
